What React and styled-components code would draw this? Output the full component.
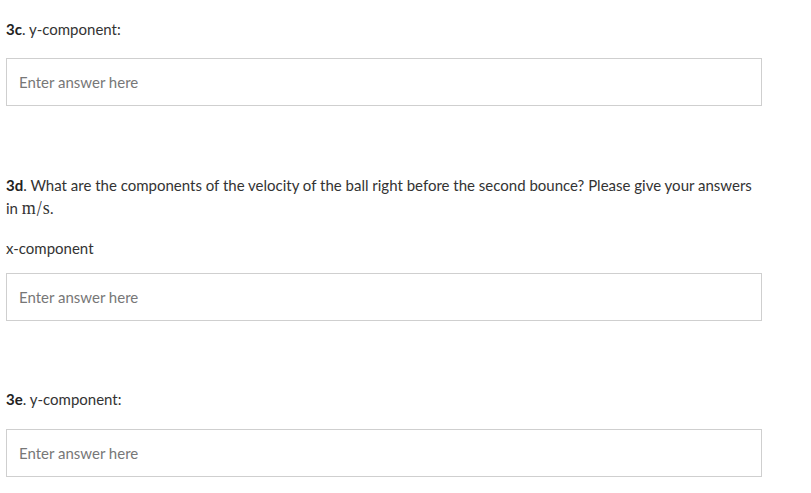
import React from "react";
import styled, { createGlobalStyle } from "styled-components";

const Global = createGlobalStyle`
  html, body { margin: 0; padding: 0; background: #fff; }
  body { font-family: "Source Sans Pro", Lato, "Noto Sans", sans-serif; color: #333; }
`;

const Page = styled.div`
  width: 755px;
  padding-left: 6px;
  padding-top: 19px;
`;

const Question = styled.div`
  margin-top: ${(p) => p.$top || 0}px;
`;

const Label = styled.div`
  font-size: 15px;
  line-height: ${(p) => p.$lh || 20}px;
  color: #333;
`;

const Num = styled.b`
  font-weight: 700;
  color: #222;
`;

const Math = styled.span`
  font-family: "Liberation Serif", "DejaVu Serif", serif;
  font-size: 18px;
  line-height: 1;
  color: #333;
`;

const Slash = styled.span`
  display: inline-block;
  margin: 0 1px;
  transform: scaleY(1.25);
`;

const Sub = styled.div`
  margin-top: ${(p) => p.$top || 0}px;
  font-size: 15px;
  line-height: 20px;
`;

const Input = styled.input`
  display: block;
  box-sizing: border-box;
  width: 756px;
  height: 48px;
  margin-top: ${(p) => p.$top || 19}px;
  border: 1px solid #cfcfcf;
  padding: 0 12px;
  font-family: inherit;
  font-size: 15px;
  color: #333;
  outline: none;
  &::placeholder { color: #777; }
`;

export default function App() {
  return (
    <>
      <Global />
      <Page>
        <Question>
          <Label><Num>3c</Num>. y-component:</Label>
          <Input placeholder="Enter answer here" $top={19} />
        </Question>
        <Question $top={68}>
          <Label $lh={23}>
            <Num>3d</Num>. What are the components of the velocity of the ball right before the second bounce? Please give your answers in{" "}
            <Math>m<Slash>/</Slash>s</Math>.
          </Label>
          <Sub $top={18}>x-component</Sub>
          <Input placeholder="Enter answer here" $top={15} />
        </Question>
        <Question $top={68}>
          <Label><Num>3e</Num>. y-component:</Label>
          <Input placeholder="Enter answer here" $top={20} />
        </Question>
      </Page>
    </>
  );
}
